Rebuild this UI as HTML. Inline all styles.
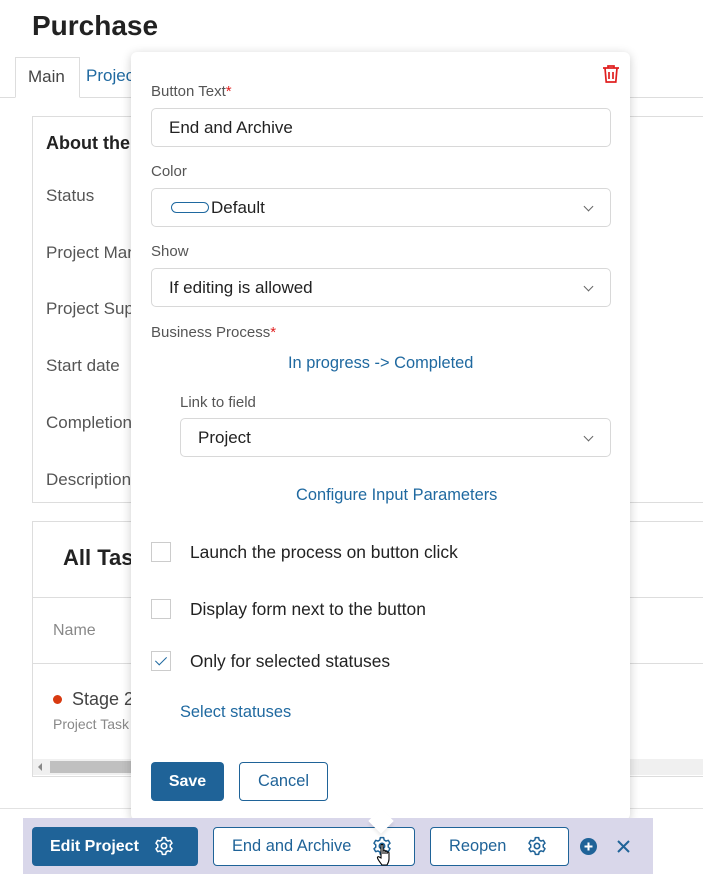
<!DOCTYPE html>
<html><head><style>
*{box-sizing:border-box;margin:0;padding:0}
body{width:703px;height:879px;position:relative;overflow:hidden;background:#fff;font-family:"Liberation Sans",sans-serif;color:#222}
.a{position:absolute}
.lbl{font-size:15px;color:#555}
.inp{position:absolute;border:1px solid #d8d8d8;border-radius:5px;background:#fff;font-size:17px;color:#222;padding-left:17px;display:flex;align-items:center}
.chev{position:absolute;right:18px;top:14px;width:7px;height:7px;border-right:1px solid #666;border-bottom:1px solid #666;transform:rotate(45deg)}
.link{color:#1f69a0;font-size:16.4px}
.cb{position:absolute;width:20px;height:20px;border:1px solid #ccc;background:#fff}
.ct{position:absolute;font-size:17.4px;color:#222}
</style></head><body>
<div class="a" style="left:32px;top:10px;font-size:28px;font-weight:bold;color:#222">Purchase</div>
<div class="a" style="left:0;top:97px;width:703px;border-top:1px solid #ddd"></div>
<div class="a" style="left:15px;top:57px;width:65px;height:41px;border:1px solid #ddd;border-bottom:1px solid #fff;background:#fff;font-size:17px;color:#444;padding:9px 0 0 12px">Main</div>
<div class="a" style="left:86px;top:66px;font-size:17px;color:#1f69a0">Project</div>
<div class="a" style="left:32px;top:116px;width:680px;height:387px;border:1px solid #ddd"></div>
<div class="a" style="left:46px;top:133px;font-size:18px;font-weight:bold">About the</div>
<div class="a lbl" style="left:46px;top:186px;font-size:17px">Status</div>
<div class="a lbl" style="left:46px;top:243px;font-size:17px">Project Man</div>
<div class="a lbl" style="left:46px;top:299px;font-size:17px">Project Sup</div>
<div class="a lbl" style="left:46px;top:356px;font-size:17px">Start date</div>
<div class="a lbl" style="left:46px;top:413px;font-size:17px">Completion</div>
<div class="a lbl" style="left:46px;top:470px;font-size:17px">Description</div>
<div class="a" style="left:32px;top:521px;width:680px;height:256px;border:1px solid #ddd"></div>
<div class="a" style="left:32px;top:597px;width:680px;border-top:1px solid #ddd"></div>
<div class="a" style="left:32px;top:663px;width:680px;border-top:1px solid #ddd"></div>
<div class="a" style="left:63px;top:545px;font-size:22px;font-weight:bold">All Tas</div>
<div class="a" style="left:53px;top:622px;font-size:16px;color:#888">Name</div>
<div class="a" style="left:53px;top:695px;width:9px;height:9px;border-radius:50%;background:#d83a10"></div>
<div class="a" style="left:72px;top:689px;font-size:18px;color:#444">Stage 2</div>
<div class="a" style="left:53px;top:716px;font-size:14px;color:#888">Project Task</div>
<div class="a" style="left:33px;top:759px;width:679px;height:16px;background:#f0f0f0"></div>
<div class="a" style="left:50px;top:761px;width:90px;height:12px;background:#c0c0c0"></div>
<div class="a" style="left:38px;top:763px;width:0;height:0;border-top:4px solid transparent;border-bottom:4px solid transparent;border-right:4px solid #888"></div>
<div class="a" style="left:0;top:808px;width:703px;border-top:1px solid #e2e2e2"></div>

<div class="a" style="left:131px;top:52px;width:499px;height:768px;background:#fff;border-radius:6px;box-shadow:0 2px 10px rgba(0,0,0,.2)"></div>
<svg class="a" style="left:602px;top:64px" width="18" height="20" viewBox="0 0 18 20"><path d="M1 4h16M6 4V2h6v2M3 4l1.2 14h9.6L15 4M7 8v7M11 8v7" fill="none" stroke="#e02020" stroke-width="1.7"/></svg>
<div class="a lbl" style="left:151px;top:83px">Button Text<span style="color:#e02020">*</span></div>
<div class="inp" style="left:151px;top:108px;width:460px;height:39px">End and Archive</div>
<div class="a lbl" style="left:151px;top:163px">Color</div>
<div class="inp" style="left:151px;top:188px;width:460px;height:39px;padding-left:19px"><span style="display:inline-block;width:38px;height:11px;border:1px solid #1f69a0;border-radius:6px;margin-right:2px"></span>Default<div class="chev"></div></div>
<div class="a lbl" style="left:151px;top:243px">Show</div>
<div class="inp" style="left:151px;top:268px;width:460px;height:39px">If editing is allowed<div class="chev"></div></div>
<div class="a lbl" style="left:151px;top:324px">Business Process<span style="color:#e02020">*</span></div>
<div class="a link" style="left:288px;top:354px">In progress -&gt; Completed</div>
<div class="a lbl" style="left:180px;top:394px">Link to field</div>
<div class="inp" style="left:180px;top:418px;width:431px;height:39px">Project<div class="chev"></div></div>
<div class="a link" style="left:296px;top:486px">Configure Input Parameters</div>
<div class="cb" style="left:151px;top:542px"></div><div class="ct" style="left:190px;top:542px">Launch the process on button click</div>
<div class="cb" style="left:151px;top:599px"></div><div class="ct" style="left:190px;top:599px">Display form next to the button</div>
<div class="cb" style="left:151px;top:651px"><div style="position:absolute;left:6px;top:2px;width:6px;height:11px;border-right:1.5px solid #1f69a0;border-bottom:1.5px solid #1f69a0;transform:rotate(45deg)"></div></div><div class="ct" style="left:190px;top:651px">Only for selected statuses</div>
<div class="a link" style="left:180px;top:703px">Select statuses</div>
<div class="a" style="left:151px;top:762px;width:73px;height:39px;background:#1f6398;border-radius:4px;color:#fff;font-size:16px;font-weight:bold;text-align:center;line-height:39px">Save</div>
<div class="a" style="left:239px;top:762px;width:89px;height:39px;border:1px solid #1f6398;border-radius:4px;color:#1f6398;font-size:16.4px;text-align:center;line-height:37px">Cancel</div>

<div class="a" style="left:23px;top:818px;width:630px;height:56px;background:#d9d7ea"></div>
<div class="a" style="left:32px;top:827px;width:166px;height:39px;background:#1f6398;border-radius:4px;color:#fff;font-size:16px;font-weight:bold;line-height:39px;padding-left:18px">Edit Project
<svg class="a" style="left:122px;top:9px" width="20" height="20" viewBox="0 0 24 24"><circle cx="12" cy="12" r="3.2" fill="none" stroke="#fff" stroke-width="2"/><path d="M10 2h4l.6 2.8 2.3 1.3 2.7-.9 2 3.5-2.1 1.9v2.7l2.1 1.9-2 3.5-2.7-.9-2.3 1.3L14 22h-4l-.6-2.8-2.3-1.3-2.7.9-2-3.5 2.1-1.9v-2.7L2.4 8.7l2-3.5 2.7.9 2.3-1.3z" fill="none" stroke="#fff" stroke-width="1.8" stroke-linejoin="round"/></svg></div>
<div class="a" style="left:213px;top:827px;width:202px;height:39px;background:#fff;border:1px solid #1f6398;border-radius:4px;color:#1f6398;font-size:16.4px;line-height:37px;padding-left:18px">End and Archive
<svg class="a" style="left:158px;top:8px" width="20" height="20" viewBox="0 0 24 24"><circle cx="12" cy="12" r="3.2" fill="none" stroke="#1f6398" stroke-width="2"/><path d="M10 2h4l.6 2.8 2.3 1.3 2.7-.9 2 3.5-2.1 1.9v2.7l2.1 1.9-2 3.5-2.7-.9-2.3 1.3L14 22h-4l-.6-2.8-2.3-1.3-2.7.9-2-3.5 2.1-1.9v-2.7L2.4 8.7l2-3.5 2.7.9 2.3-1.3z" fill="none" stroke="#1f6398" stroke-width="1.8" stroke-linejoin="round"/></svg></div>
<div class="a" style="left:372px;top:812px;width:18px;height:18px;background:#fff;transform:rotate(45deg);z-index:2;box-shadow:2px 2px 3px rgba(0,0,0,.08)"></div>
<svg class="a" style="left:376px;top:843px;z-index:3" width="18" height="24" viewBox="0 0 18 24"><path d="M5 2.5c0-1.4 2-1.4 2 0V11v-3c0-1.3 2-1.3 2 0v3-2c0-1.3 2-1.3 2 0v2-1c0-1.3 2-1.3 2 0v6c0 3-1.5 5-2 6H6c-1-1.5-4-5-4.5-7-.3-1.2 1-1.8 2-.8L5 15z" fill="#fff" stroke="#000" stroke-width="1.1"/></svg>
<div class="a" style="left:430px;top:827px;width:139px;height:39px;background:#fff;border:1px solid #1f6398;border-radius:4px;color:#1f6398;font-size:16.4px;line-height:37px;padding-left:18px">Reopen
<svg class="a" style="left:96px;top:8px" width="20" height="20" viewBox="0 0 24 24"><circle cx="12" cy="12" r="3.2" fill="none" stroke="#1f6398" stroke-width="2"/><path d="M10 2h4l.6 2.8 2.3 1.3 2.7-.9 2 3.5-2.1 1.9v2.7l2.1 1.9-2 3.5-2.7-.9-2.3 1.3L14 22h-4l-.6-2.8-2.3-1.3-2.7.9-2-3.5 2.1-1.9v-2.7L2.4 8.7l2-3.5 2.7.9 2.3-1.3z" fill="none" stroke="#1f6398" stroke-width="1.8" stroke-linejoin="round"/></svg></div>
<svg class="a" style="left:580px;top:838px" width="17" height="17" viewBox="0 0 17 17"><circle cx="8.5" cy="8.5" r="8.5" fill="#1f6398"/><path d="M8.5 4.5v8M4.5 8.5h8" stroke="#fff" stroke-width="2"/></svg>
<svg class="a" style="left:616px;top:839px" width="15" height="15" viewBox="0 0 15 15"><path d="M2 2l11 11M13 2L2 13" stroke="#1f6398" stroke-width="2"/></svg>
</body></html>
